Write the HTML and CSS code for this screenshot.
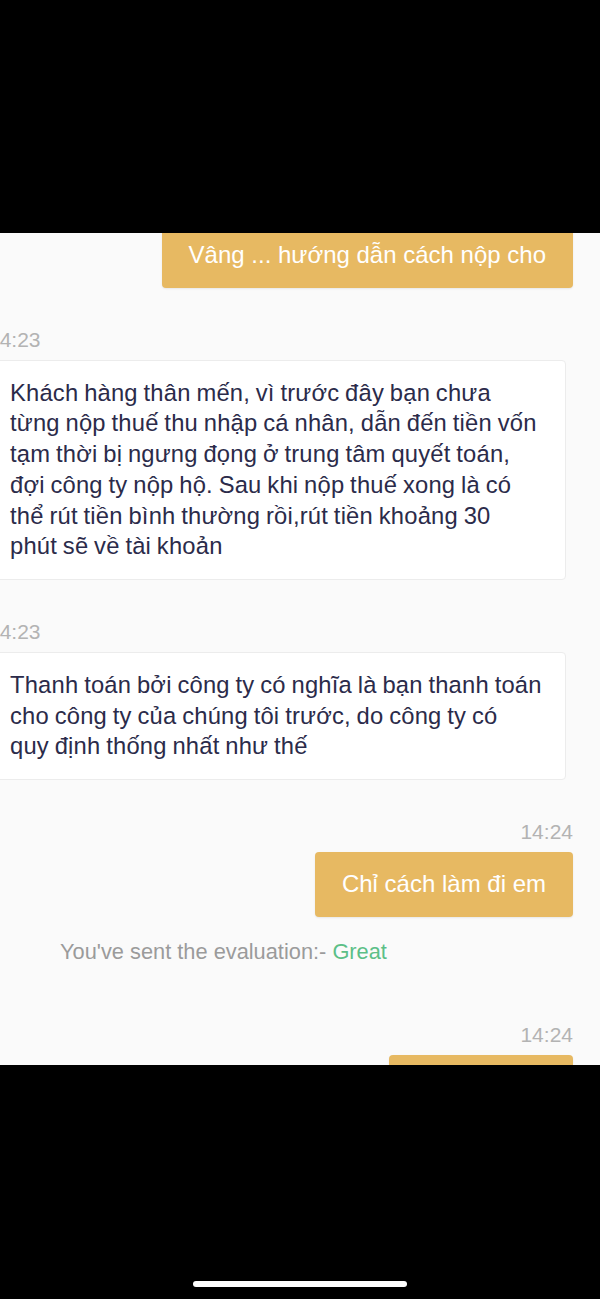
FILE: index.html
```html
<!DOCTYPE html>
<html lang="vi">
  <head>
    <meta charset="UTF-8" />
    <meta name="viewport" content="width=device-width, initial-scale=1.0" />
    <title>Chat</title>
    <link rel="stylesheet" href="styles.css">
  </head>
  <body>
    <div class="screen">
      <div class="bar-top"></div>

      <div class="chat">
        <div class="chat-list">
          <div class="msg msg--out">
            <div class="bubble bubble--out">Vâng ... hướng dẫn cách nộp cho</div>
          </div>

          <div class="msg msg--in">
            <p class="time">14:23</p>
            <div class="bubble bubble--in">Khách hàng thân mến, vì trước đây bạn chưa từng nộp thuế thu nhập cá nhân, dẫn đến tiền vốn tạm thời bị ngưng đọng ở trung tâm quyết toán, đợi công ty nộp hộ. Sau khi nộp thuế xong là có thể rút tiền bình thường rồi,rút tiền khoảng 30 phút sẽ về tài khoản</div>
          </div>

          <div class="msg msg--in">
            <p class="time">14:23</p>
            <div class="bubble bubble--in">Thanh toán bởi công ty có nghĩa là bạn thanh toán cho công ty của chúng tôi trước, do công ty có quy định thống nhất như thế</div>
          </div>

          <div class="msg msg--out">
            <p class="time">14:24</p>
            <div class="bubble bubble--out">Chỉ cách làm đi em</div>
          </div>

          <p class="evaluation">You've sent the evaluation:- <span class="evaluation__value">Great</span></p>

          <div class="msg msg--out msg--last">
            <p class="time">14:24</p>
            <div class="bubble bubble--out">Vâng, em ơi</div>
          </div>
        </div>
      </div>

      <div class="bar-bottom">
        <div class="home-indicator"></div>
      </div>
    </div>
  </body>
</html>
```

FILE: styles.css
```css
html,
body {
  margin: 0;
  padding: 0;
  background: #000;
}
body {
  font-family: "Liberation Sans", Arial, Helvetica, sans-serif;
}
.screen {
  width: 600px;
  height: 1299px;
  display: flex;
  flex-direction: column;
}
.bar-top {
  height: 233px;
  background: #000;
}
.chat {
  height: 832px;
  overflow: hidden;
  background: #fafafa;
}
.chat-list {
  display: flex;
  flex-direction: column;
  margin-top: -10px;
  padding-right: 27px;
}
.msg {
  display: flex;
  flex-direction: column;
  margin-top: 40px;
}
.msg:first-child {
  margin-top: 0;
}
.msg--in {
  align-items: flex-start;
  margin-left: -12px;
}
.msg--out {
  align-items: flex-end;
}
.msg--last {
  margin-top: 59px;
}
.time {
  margin: 0 0 8px;
  font-size: 21px;
  line-height: 24px;
  color: #b3b3b3;
}
.bubble {
  font-size: 24px;
  line-height: 30.7px;
  border-radius: 4px;
}
.bubble--out {
  background: #e7b962;
  color: #fff;
  padding: 17px 27px;
  box-shadow: 0 1px 2px rgba(0, 0, 0, 0.08);
}
.bubble--in {
  background: #fff;
  color: #2b2b4a;
  border: 1px solid #ececec;
  width: 578px;
  box-sizing: border-box;
  padding: 17px 23px 17px 21px;
  font-size: 23.75px;
  letter-spacing: 0.2px;
  word-spacing: -1px;
}
.evaluation {
  margin: 23px 0 0;
  padding-left: 60px;
  font-size: 21.8px;
  line-height: 24px;
  color: #9b9b9b;
}
.evaluation__value {
  color: #5cbf87;
}
.bar-bottom {
  flex: 1;
  background: #000;
  display: flex;
  justify-content: center;
  align-items: flex-end;
  padding-bottom: 12px;
}
.home-indicator {
  width: 214px;
  height: 6px;
  border-radius: 3px;
  background: #fff;
}
```
